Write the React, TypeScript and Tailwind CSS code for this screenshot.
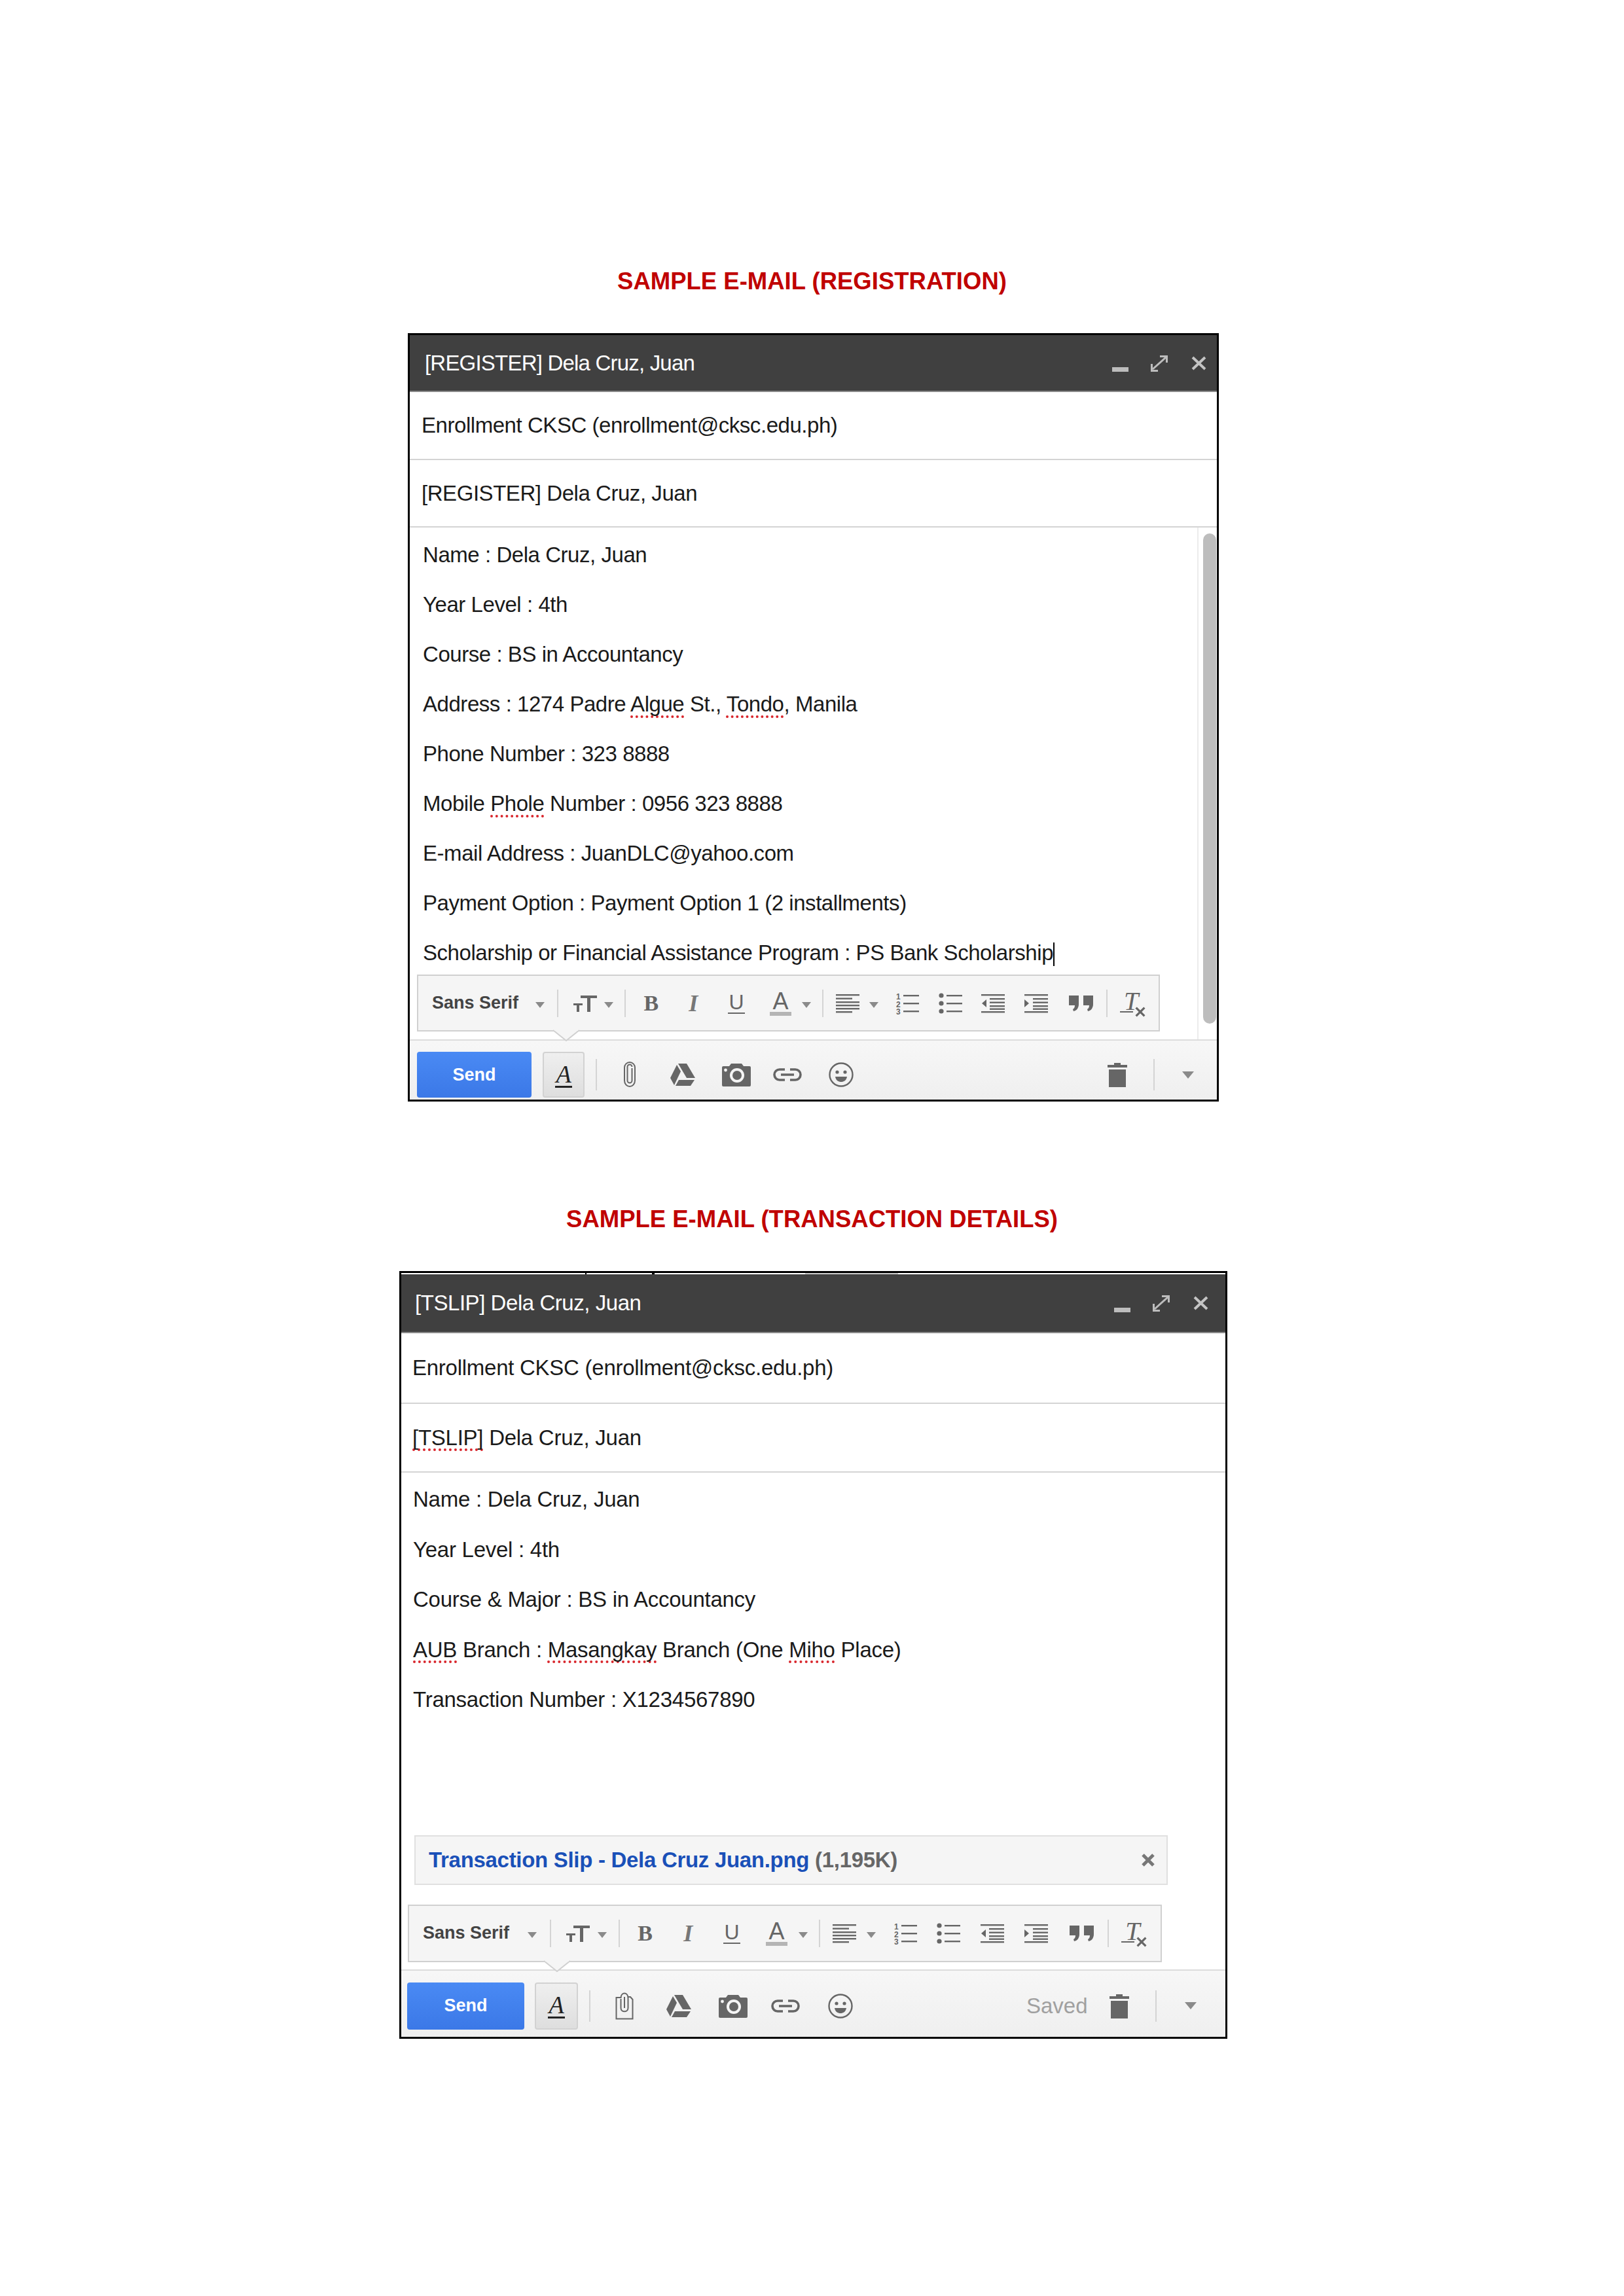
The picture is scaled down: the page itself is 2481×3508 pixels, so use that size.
import React from 'react';

const sans = 'font-["Liberation_Sans",Arial,sans-serif]';
const serif = 'font-["Liberation_Serif","Times_New_Roman",serif]';
const bodyText = 'text-[33px] tracking-[-0.45px] text-[#1a1a1a]';
const bodyTextWide = 'text-[33px] tracking-[-0.26px] text-[#1a1a1a]';

function Miss({ children }: { children: React.ReactNode }) {
  return (
    <span className="underline decoration-dotted decoration-[#d9262c] decoration-[4px] underline-offset-[6px] [text-decoration-skip-ink:none]">
      {children}
    </span>
  );
}

function Caret({ className = 'h-[9px] w-[14px]' }: { className?: string }) {
  return (
    <svg viewBox="0 0 14 9" preserveAspectRatio="none" className={className}>
      <path d="M0 0h14L7 9z" fill="#8a8a8a" />
    </svg>
  );
}

function Sep() {
  return <div className="h-[42px] w-[2px] bg-[#d4d4d4]" />;
}

function SizeIcon() {
  return (
    <svg width="36" height="26" viewBox="0 0 36 26">
      <path d="M11 1h25v4h-10v21h-5V5H11z" fill="#666" />
      <path d="M0 13h14v3H9v10H5V16H0z" fill="#666" />
    </svg>
  );
}

function AlignIcon() {
  return (
    <svg width="36" height="30" viewBox="0 0 36 30" fill="#666">
      <rect y="1" width="36" height="2.4" />
      <rect y="6.5" width="25" height="2.4" />
      <rect y="12" width="36" height="2.4" />
      <rect y="17" width="36" height="2.4" />
      <rect y="22" width="36" height="2.4" />
      <rect y="27" width="25" height="2.4" />
    </svg>
  );
}

function NumberedIcon() {
  return (
    <svg width="36" height="40" viewBox="0 0 36 40" fill="#666">
      <text x="1" y="14" fontSize="12" fontWeight="700" fontFamily="Liberation Sans">1</text>
      <text x="1" y="26" fontSize="12" fontWeight="700" fontFamily="Liberation Sans">2</text>
      <text x="1" y="37" fontSize="12" fontWeight="700" fontFamily="Liberation Sans">3</text>
      <rect x="12" y="7" width="24" height="2.4" />
      <rect x="12" y="19" width="24" height="2.4" />
      <rect x="12" y="31" width="24" height="2.4" />
    </svg>
  );
}

function BulletIcon() {
  return (
    <svg width="36" height="34" viewBox="0 0 36 34" fill="#666">
      <circle cx="4" cy="5" r="3.6" />
      <circle cx="4" cy="17" r="3.6" />
      <circle cx="4" cy="29" r="3.6" />
      <rect x="12" y="4" width="24" height="2.4" />
      <rect x="12" y="16" width="24" height="2.4" />
      <rect x="12" y="28" width="24" height="2.4" />
    </svg>
  );
}

function IndentIcon({ more = false }: { more?: boolean }) {
  return (
    <svg width="36" height="30" viewBox="0 0 36 30" fill="#666">
      <rect y="1" width="36" height="2.4" />
      <rect x="13" y="7" width="23" height="2.4" />
      <rect x="13" y="12.5" width="23" height="2.4" />
      <rect x="13" y="18" width="23" height="2.4" />
      <rect y="27" width="36" height="2.4" />
      <rect x="13" y="22.5" width="23" height="2.4" />
      {more ? <path d="M0 9l7 6-7 6z" /> : <path d="M8 9l-7 6 7 6z" />}
    </svg>
  );
}

function QuoteIcon() {
  return (
    <svg width="38" height="26" viewBox="0 0 38 26" fill="#666">
      <path d="M0 1h15v13c0 6-3 10-8 11l-1-3c2-1 3-3 3-6H0z" />
      <path d="M22 1h15v13c0 6-3 10-8 11l-1-3c2-1 3-3 3-6h-9z" />
    </svg>
  );
}

function ClearIcon() {
  return (
    <div className={`relative h-[38px] w-[38px] ${serif} text-[#666]`}>
      <span className="block pl-[6px] text-[40px] italic leading-[32px]">T</span>
      <div className="absolute left-0 top-[31px] h-[2px] w-[20px] bg-[#666]" />
      <svg width="16" height="16" viewBox="0 0 15 15" className="absolute left-[23px] top-[24px]">
        <path d="M1.5 1.5l12 12m0-12l-12 12" stroke="#666" strokeWidth="3" />
      </svg>
    </div>
  );
}

function Toolbar({ className }: { className: string }) {
  return (
    <div className={`relative border-2 border-[#d0d0d0] bg-[#f5f5f5] pl-[21px] ${className}`}>
      <div className="grid h-full grid-cols-[158fr_33fr_25fr_47fr_32fr_29fr_69fr_60fr_64fr_49fr_31fr_21fr_51fr_40fr_66fr_66fr_66fr_68fr_57fr_21fr_59fr] items-center">
        <span className={`${sans} whitespace-nowrap text-[27px] font-bold leading-none text-[#444]`}>Sans Serif</span>
        <Caret className="mt-[6px] h-[9px] w-[14px]" />
        <Sep />
        <SizeIcon />
        <Caret className="mt-[6px] h-[9px] w-[14px]" />
        <Sep />
        <span className={`${serif} text-[34px] font-bold leading-none text-[#666]`}>B</span>
        <span className={`${serif} text-[36px] font-bold italic leading-none text-[#777]`}>I</span>
        <div className={`${sans} w-[26px] border-b-[2px] border-[#666] text-center text-[32px] leading-[31px] text-[#666]`}>U</div>
        <div className={`${sans} w-[33px] border-b-[6px] border-[#b5b5b5] text-center text-[36px] leading-[33px] text-[#666]`}>A</div>
        <Caret className="mt-[6px] h-[9px] w-[14px]" />
        <Sep />
        <AlignIcon />
        <Caret className="mt-[6px] h-[9px] w-[14px]" />
        <NumberedIcon />
        <BulletIcon />
        <IndentIcon />
        <IndentIcon more />
        <QuoteIcon />
        <Sep />
        <ClearIcon />
      </div>
      {/* little arrow pointing at the formatting button */}
      <svg width="42" height="19" viewBox="0 0 42 19" className="absolute left-[205px] top-[calc(100%-1px)] z-10">
        <path d="M1 1l20 16L41 1" fill="#f5f5f5" stroke="#d0d0d0" strokeWidth="2" />
        <path d="M3 0h36v2H3z" fill="#f5f5f5" />
      </svg>
    </div>
  );
}

function ClipIcon() {
  return (
    <svg width="20" height="40" viewBox="0 0 20 40" fill="none" stroke="#666" strokeWidth="2">
      <path d="M13.500 10v19a3.500 3.500 0 0 1-7 0V8a3.500 3.500 0 0 1 7 0M2 9v20a8 9 0 0 0 16 0V9a8 8 0 0 0-16 0" />
    </svg>
  );
}

function ClipDocIcon() {
  return (
    <svg width="28" height="42" viewBox="0 0 28 42" fill="none" stroke="#666" strokeWidth="2">
      <path d="M8 8H1.500v32.500h25V11L23 7h-4" />
      <path d="M8.500 9c0-10 11-10 11 0v15c0 7-11 7-11 0V10" />
      <path d="M14 7v17" />
    </svg>
  );
}

function DriveIcon() {
  return (
    <svg width="38" height="34" viewBox="0 0 38 34" fill="#666">
      <path d="M12 0h13l13 22H25z" />
      <path d="M10 2l6 10L6 33 0 22z" />
      <path d="M13 25h24l-6 9H8z" />
    </svg>
  );
}

function CameraIcon({ width }: { width: number }) {
  return (
    <svg width={width} height="36" viewBox="0 0 44 36">
      <path d="M2 5h9l3-4h16l3 4h9a2 2 0 0 1 2 2v27a2 2 0 0 1-2 2H2a2 2 0 0 1-2-2V7a2 2 0 0 1 2-2z" fill="#666" />
      <circle cx="23" cy="19" r="11" fill="#f5f5f5" />
      <circle cx="23" cy="19" r="7" fill="#666" />
      <circle cx="5.500" cy="11" r="2.400" fill="#f5f5f5" />
    </svg>
  );
}

function LinkIcon() {
  return (
    <svg width="44" height="20" viewBox="0 0 44 20" fill="none" stroke="#666" strokeWidth="3.600">
      <path d="M18 2H10a8 8 0 0 0 0 16h8M26 2h8a8 8 0 0 1 0 16h-8M12 10h20" />
    </svg>
  );
}

function SmileIcon() {
  return (
    <svg width="38" height="38" viewBox="0 0 38 38">
      <circle cx="19" cy="19" r="17.500" fill="none" stroke="#666" strokeWidth="2.400" />
      <circle cx="13" cy="15" r="2.600" fill="#666" />
      <circle cx="25" cy="15" r="2.600" fill="#666" />
      <path d="M10 22h18c-1 6-5 8-9 8s-8-2-9-8z" fill="#666" />
    </svg>
  );
}

function TrashIcon() {
  return (
    <svg width="30" height="38" viewBox="0 0 30 38" fill="#666">
      <path d="M0 4h10V1h10v3h10v4H0z" />
      <rect x="2" y="11" width="26" height="27" />
    </svg>
  );
}

function Footer({ cols, second = false }: { cols: string; second?: boolean }) {
  return (
    <div className={`grid items-center border-t-2 border-[#dcdcdc] bg-linear-to-b from-[#f7f7f7] to-[#efefef] ${cols}`}>
      <div className={`flex items-center justify-center rounded-[4px] bg-linear-to-b from-[#4a8af4] to-[#3b78e7] ${second ? 'h-[72px] w-[179px]' : 'h-[70px] w-[175px]'}`}>
        <span className={`${sans} text-[27px] font-bold text-white`}>Send</span>
      </div>
      <div className={`flex items-center justify-center rounded-[4px] border-2 border-[#d2d2d2] bg-linear-to-b from-[#efefef] to-[#dedede] ${second ? 'h-[72px] w-[66px]' : 'h-[70px] w-[64px]'}`}>
        <span className={`${serif} border-b-[3px] border-[#222] px-[1px] text-[38px] italic leading-[36px] text-[#222]`}>A</span>
      </div>
      <div className="h-[48px] w-[2px] bg-[#d4d4d4]" />
      {second ? <ClipDocIcon /> : <ClipIcon />}
      <DriveIcon />
      <CameraIcon width={second ? 46 : 44} />
      <LinkIcon />
      <SmileIcon />
      <span className={`${sans} text-[33px] leading-none text-[#a0a0a0]`}>{second ? 'Saved' : ''}</span>
      <TrashIcon />
      <div className="h-[48px] w-[2px] bg-[#d4d4d4]" />
      <Caret className="h-[11px] w-[18px]" />
    </div>
  );
}

type HeadProps = {
  title: string;
  to: string;
  subject: React.ReactNode;
  titleClass: string;
  rowText: string;
  headClass: string;
  toClass: string;
  subjectClass: string;
  controlsClass: string;
};

function WindowHead({ title, to, subject, titleClass, rowText, headClass, toClass, subjectClass, controlsClass }: HeadProps) {
  return (
    <>
      <div className={`flex items-center justify-between border-b-2 border-[#8a8a8a] bg-[#404040] ${headClass}`}>
        <span className={`text-[33px] text-white ${titleClass}`}>{title}</span>
        <div className={`flex items-center ${controlsClass}`}>
          <div className="mt-[20px] h-[7px] w-[25px] bg-[#bdbdbd]" />
          <svg width="28" height="26" viewBox="0 0 28 26" className="ml-[33px]" fill="none" stroke="#bdbdbd" strokeWidth="3">
            <path d="M4 22L24 4M15 2.500h10.500V12M2.500 14v10.500H12" />
          </svg>
          <svg width="23" height="22" viewBox="0 0 23 22" className="ml-[35px]" fill="none" stroke="#c4c4c4" strokeWidth="4">
            <path d="M2 2l19 18M21 2L2 20" />
          </svg>
        </div>
      </div>
      <div className={`flex items-center border-b-2 border-[#d4d4d4] ${toClass} ${rowText}`}>{to}</div>
      <div className={`flex items-center border-b-2 border-[#d4d4d4] ${subjectClass} ${rowText}`}>{subject}</div>
    </>
  );
}

function FirstWindow() {
  const rows: React.ReactNode[] = [
    'Name : Dela Cruz, Juan',
    'Year Level : 4th',
    'Course : BS in Accountancy',
    <>Address : 1274 Padre <Miss>Algue</Miss> St., <Miss>Tondo</Miss>, Manila</>,
    'Phone Number : 323 8888',
    <>Mobile <Miss>Phole</Miss> Number : 0956 323 8888</>,
    'E-mail Address : JuanDLC@yahoo.com',
    'Payment Option : Payment Option 1 (2 installments)',
    <>Scholarship or Financial Assistance Program : PS Bank Scholarship<span className="inline-block h-[36px] w-[2px] bg-black align-middle" /></>,
  ];
  return (
    <div className={`ml-[4px] mt-[59px] w-[1239px] border-[3px] border-black ${sans}`}>
      <WindowHead
        title="[REGISTER] Dela Cruz, Juan"
        to="Enrollment CKSC (enrollment@cksc.edu.ph)"
        subject="[REGISTER] Dela Cruz, Juan"
        titleClass="tracking-[-0.8px]"
        rowText={bodyText}
        headClass="h-[87px] pl-[23px]"
        toClass="h-[104px] pl-[18px]"
        subjectClass="h-[103px] pl-[18px]"
        controlsClass="pr-[16px]"
      />
      <div className="flex">
        <div className="flex-1 pl-[11px]">
          <div className={`pl-[9px] pt-[4px] ${bodyText}`}>
            {rows.map((row, i) => (
              <div key={i} className="h-[76px] leading-[76px]">{row}</div>
            ))}
          </div>
          <Toolbar className="-mt-[5px] mb-[12px] h-[87px] w-[1135px]" />
        </div>
        <div className="w-[30px] border-l-2 border-[#ececec] pl-[7px] pt-[9px]">
          <div className="h-[749px] w-[20px] rounded-full bg-[#bdbdbd]" />
        </div>
      </div>
      <Footer cols="h-[92px] pl-[11px] pt-[14px] grid-cols-[192px_81px_42px_72px_79px_78px_85px_302px_124px_70px_44px_55px]" />
    </div>
  );
}

function SecondWindow() {
  const rows: React.ReactNode[] = [
    'Name : Dela Cruz, Juan',
    'Year Level : 4th',
    'Course & Major : BS in Accountancy',
    <><Miss>AUB</Miss> Branch : <Miss>Masangkay</Miss> Branch (One <Miss>Miho</Miss> Place)</>,
    'Transaction Number : X1234567890',
  ];
  return (
    <div className={`ml-[4px] mt-[59px] w-[1265px] border-[3px] border-black ${sans}`}>
      {/* leftover strip from the pasted screenshot */}
      <div className="flex h-[2px] bg-white">
        <div className="ml-[281px] w-[2px] bg-black" />
        <div className="ml-[100px] w-[4px] bg-black" />
        <div className="ml-[230px] w-[142px] bg-[#cccccc]" />
      </div>
      <WindowHead
        title="[TSLIP] Dela Cruz, Juan"
        to="Enrollment CKSC (enrollment@cksc.edu.ph)"
        subject={<><Miss>[TSLIP]</Miss>&nbsp;Dela Cruz, Juan</>}
        titleClass="tracking-[-0.45px]"
        rowText={bodyTextWide}
        headClass="h-[90px] pl-[21px]"
        toClass="h-[108px] pl-[17px]"
        subjectClass="h-[105px] pl-[17px]"
        controlsClass="pr-[26px]"
      />
      <div className="pl-[10px] pr-[11px]">
        <div className={`pl-[8px] pt-[3px] ${bodyTextWide}`}>
          {rows.map((row, i) => (
            <div key={i} className="h-[76.500px] leading-[76.500px]">{row}</div>
          ))}
        </div>
        <div className="ml-[10px] mt-[168px] flex h-[76px] w-[1151px] items-center justify-between border-2 border-[#e0e0e0] bg-[#f5f5f5] pl-[20px] pr-[18px] text-[33px] font-bold tracking-[-0.3px]">
          <span>
            <span className="text-[#1a50b8]">Transaction Slip - Dela Cruz Juan.png</span>{' '}
            <span className="text-[#666]">(1,195K)</span>
          </span>
          <svg width="20" height="20" viewBox="0 0 20 20">
            <path d="M2 2l16 16M18 2L2 18" stroke="#777" strokeWidth="5" />
          </svg>
        </div>
        <Toolbar className="mb-[11px] mt-[30px] h-[88px] w-[1152px]" />
      </div>
      <Footer second cols="h-[103px] pl-[9px] pt-[7px] grid-cols-[195px_83px_40px_78px_79px_81px_87px_303px_127px_70px_45px_60px]" />
    </div>
  );
}

export default function App() {
  return (
    <div className={`flex h-[3508px] flex-col items-center bg-white pt-[410px] ${sans}`}>
      <h1 className="h-[40px] text-[36.500px] font-bold leading-[40px] text-[#c00000]">SAMPLE E-MAIL (REGISTRATION)</h1>
      <FirstWindow />
      <h1 className="mt-[160px] h-[40px] text-[36.500px] font-bold leading-[40px] text-[#c00000]">SAMPLE E-MAIL (TRANSACTION DETAILS)</h1>
      <SecondWindow />
    </div>
  );
}
